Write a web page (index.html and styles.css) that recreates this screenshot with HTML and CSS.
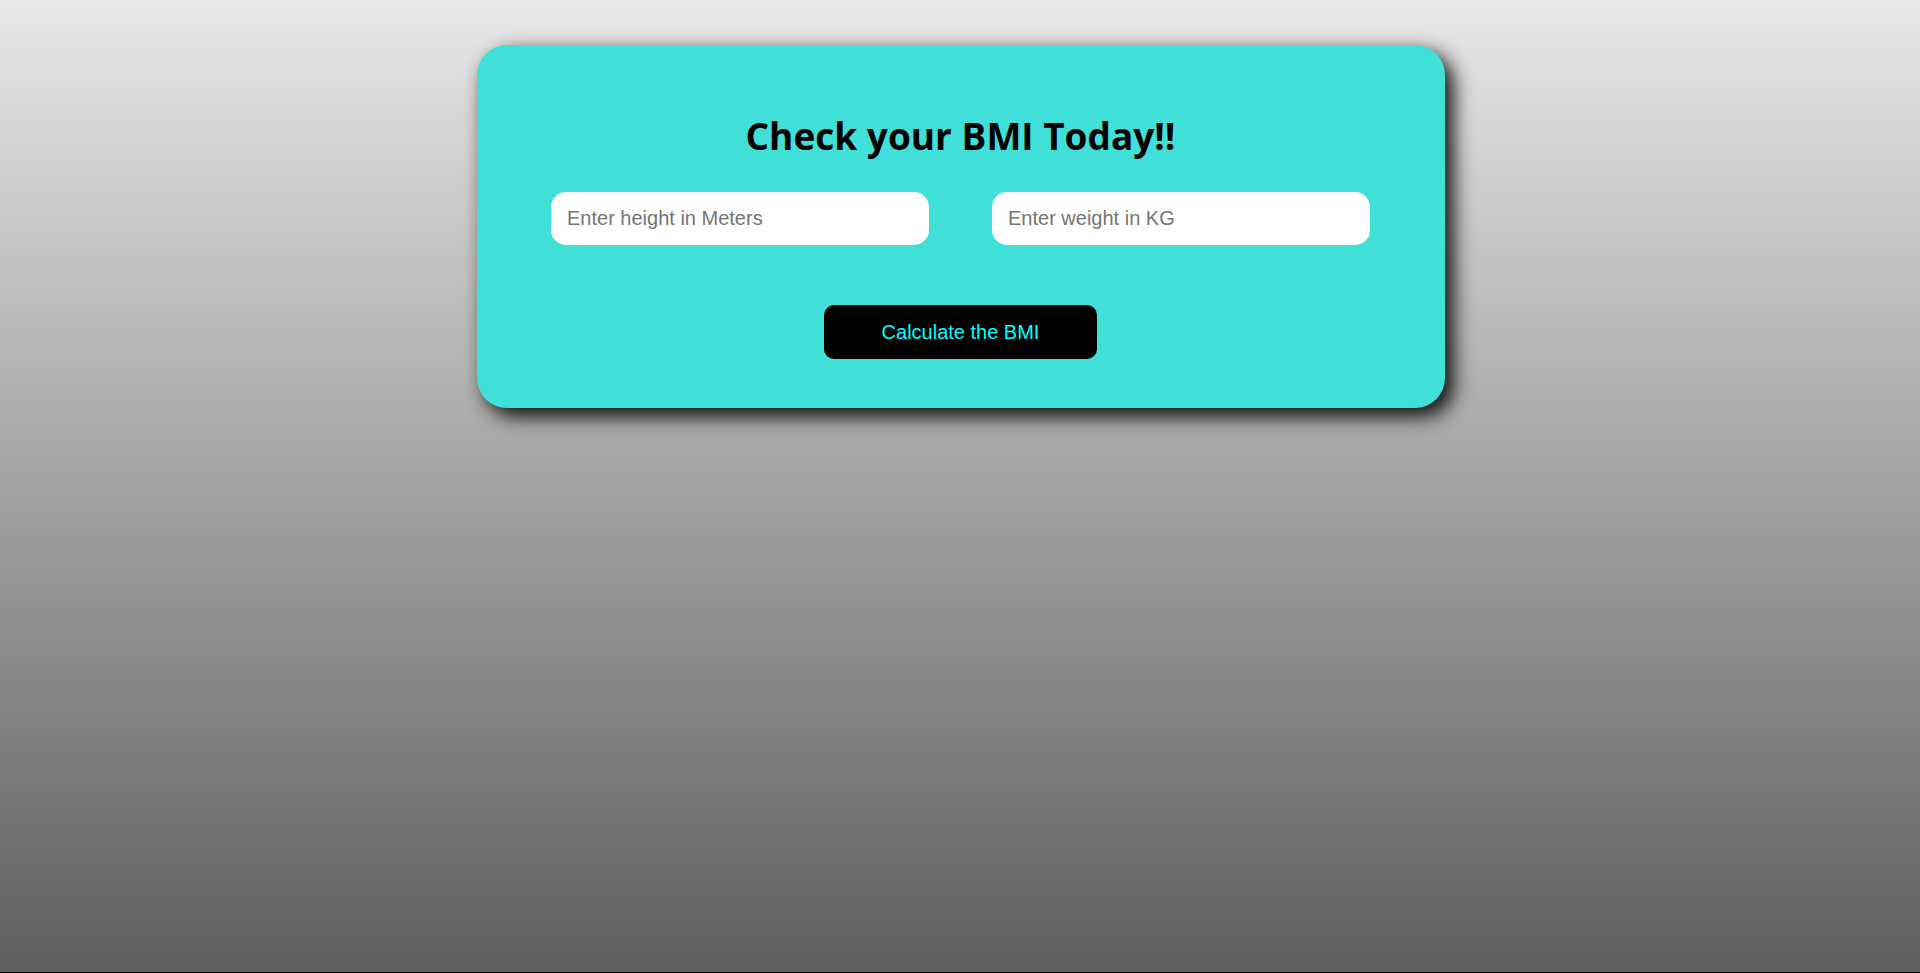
FILE: index.html
```html
<!DOCTYPE html>
<html lang="en">
<head>
<meta charset="utf-8">
<title>BMI Calculator</title>
<link rel="stylesheet" href="styles.css">
</head>
<body>
  <main class="page">
    <section class="card">
      <h1 class="title">Check your BMI Today!!</h1>
      <div class="fields">
        <input class="field" type="text" placeholder="Enter height in Meters">
        <input class="field" type="text" placeholder="Enter weight in KG">
      </div>
      <button class="calc" type="button">Calculate the BMI</button>
    </section>
  </main>
</body>
</html>
```

FILE: styles.css
```css
html {
  background: #000;
}
body {
  margin: 0;
  height: 972px;
  background: linear-gradient(to bottom, #e9e7e8 0%, #5e5e5e 100%);
  font-family: "Liberation Sans", Arial, sans-serif;
}
.page {
  display: flex;
  justify-content: center;
  padding-top: 45px;
  padding-left: 1px;
}
.card {
  width: 968px;
  height: 363px;
  box-sizing: border-box;
  background: #40e0d8;
  border-radius: 30px;
  box-shadow: 8px 8px 20px rgba(0, 0, 0, 0.95);
  display: flex;
  flex-direction: column;
  align-items: center;
  padding-top: 71px;
}
.title {
  margin: 0;
  font-family: "Open Sans", "Noto Sans", sans-serif;
  font-weight: 700;
  font-size: 37px;
  line-height: 40px;
  color: #000;
}
.fields {
  display: flex;
  gap: 63px;
  margin-top: 36px;
}
.field {
  width: 378px;
  height: 53px;
  box-sizing: border-box;
  border: none;
  border-radius: 15px;
  background: #fff;
  padding: 0 16px;
  font-family: "Liberation Sans", Arial, sans-serif;
  font-size: 20px;
  color: #000;
  outline: none;
}
.field::placeholder {
  color: #757575;
}
.calc {
  margin-top: 60px;
  width: 273px;
  height: 54px;
  border: none;
  border-radius: 10px;
  background: #000;
  color: #00ffff;
  font-family: "Liberation Sans", Arial, sans-serif;
  font-size: 20px;
  padding: 0;
}
```
